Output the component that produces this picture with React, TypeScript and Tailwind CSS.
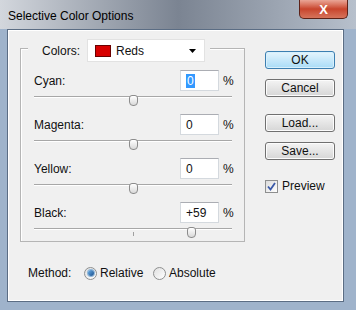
import React from "react"

const font = { fontFamily: '"Liberation Sans", Arial, sans-serif' }

type Row = { label: string; value: string; thumb: number; selected?: boolean }

const rows: Row[] = [
  { label: "Cyan:", value: "0", thumb: 95, selected: true },
  { label: "Magenta:", value: "0", thumb: 95 },
  { label: "Yellow:", value: "0", thumb: 95 },
  { label: "Black:", value: "+59", thumb: 153 },
]

function Slider({ thumb }: { thumb: number }) {
  return (
    <div className="relative ml-[13px] h-[16px] w-[198px]">
      <div className="absolute left-0 right-0 top-[5px] h-[2px] border-t border-[#a7a7a7] bg-white" />
      <div className="absolute left-[99px] top-[9px] h-[4px] w-px bg-[#a0a0a0]" />
      <div
        className="absolute top-[4px] h-[11px] w-[9px] rounded-t-[3px] rounded-b-[4px] border border-[#8c8c8c] bg-gradient-to-b from-white to-[#d9d9d9]"
        style={{ left: thumb }}
      />
    </div>
  )
}

function Btn({ children, primary }: { children: React.ReactNode; primary?: boolean }) {
  return (
    <div
      className={
        primary
          ? "flex h-[18px] w-[70px] items-center justify-center rounded-[3px] border border-[#3c7fb1] bg-gradient-to-b from-[#e5f5fd] to-[#a9dcf7] text-[12px] shadow-[inset_0_0_0_1px_#d8f0fc]"
          : "flex h-[18px] w-[70px] items-center justify-center rounded-[3px] border border-[#707070] bg-gradient-to-b from-[#f4f4f4] to-[#d6d6d6] text-[12px] shadow-[inset_0_0_0_1px_#fcfcfc]"
      }
    >
      {children}
    </div>
  )
}

function Radio({ on }: { on?: boolean }) {
  return (
    <div className="flex h-[13px] w-[13px] items-center justify-center rounded-full border border-[#8e8f8f] bg-gradient-to-br from-[#e0e0e0] to-white">
      {on && <div className="h-[6px] w-[6px] rounded-full bg-gradient-to-br from-[#6fb2e8] to-[#174f8e] shadow-[0_0_0_1px_#8fb6d8]" />}
    </div>
  )
}

export default function App() {
  return (
    <div
      className="flex h-[310px] w-[356px] flex-col bg-[#9fb3cb] text-[#111]"
      style={font}
    >
      <div className="flex h-[29px] items-start justify-between bg-gradient-to-r from-[#d3d7dd] via-[#7b8492] to-[#b7c0cc]">
        <div className="pl-[8px] pt-[7px] text-[12px] text-black">Selective Color Options</div>
        <div className="mr-[8px] flex h-[19px] w-[49px] items-center justify-center rounded-b-[5px] border border-t-0 border-[#5d2218] bg-gradient-to-b from-[#e9a596] via-[#c8442c] to-[#d6735b]">
          <span className="text-[13px] font-bold leading-none text-white">X</span>
        </div>
      </div>

      <div className="ml-[7px] flex h-[273px] w-[337px] flex-col border border-[#5b6d84] bg-[#f0f0f0] shadow-[inset_0_0_0_1px_#ffffff]">
        <div className="flex">
          <div className="ml-[12px] mt-[18px] flex h-[194px] w-[225px] flex-col border border-[#b5b5b5] shadow-[inset_1px_1px_0_#ffffff]">
            <div className="-mt-[10px] ml-[7px] flex h-[23px] w-[182px] items-center bg-[#f0f0f0] pl-[14px]">
              <span className="w-[45px] text-[12px]">Colors:</span>
              <div className="flex h-[23px] w-[118px] items-center border border-[#e2e2e2] bg-white pl-[7px]">
                <div className="h-[12px] w-[16px] border border-[#6a0000] bg-[#d70000]" />
                <span className="ml-[5px] flex-1 text-[12px]">Reds</span>
                <svg width="7" height="4" viewBox="0 0 7 4" className="mr-[8px]">
                  <path d="M0 0h7L3.5 4z" fill="#000" />
                </svg>
              </div>
            </div>

            <div className="mt-[8px] flex flex-col gap-[7px]">
              {rows.map((r) => (
                <div key={r.label} className="flex flex-col">
                  <div className="flex h-[21px] items-center pl-[13px]">
                    <span className="w-[146px] text-[12px]">{r.label}</span>
                    <div className="flex h-[21px] w-[39px] items-center border border-[#d4d9de] border-t-[#abadb3] bg-white pl-[5px] text-[12px]">
                      {r.selected ? (
                        <span className="bg-[#3399ff] px-px leading-[14px] text-white">{r.value}</span>
                      ) : (
                        <span>{r.value}</span>
                      )}
                    </div>
                    <span className="ml-[4px] text-[12px]">%</span>
                  </div>
                  <Slider thumb={r.thumb} />
                </div>
              ))}
            </div>
          </div>

          <div className="ml-[20px] mt-[21px] flex flex-col">
            <Btn primary>OK</Btn>
            <div className="mt-[10px]">
              <Btn>Cancel</Btn>
            </div>
            <div className="mt-[17px]">
              <Btn>Load...</Btn>
            </div>
            <div className="mt-[10px]">
              <Btn>Save...</Btn>
            </div>
            <div className="mt-[17px] flex items-center">
              <div className="flex h-[13px] w-[13px] items-center justify-center border border-[#8e8f8f] bg-gradient-to-br from-[#dcdcdc] to-white">
                <svg width="9" height="9" viewBox="0 0 9 9">
                  <path d="M1 4.5l2.5 3L8 1" stroke="#3a59a8" strokeWidth="1.8" fill="none" />
                </svg>
              </div>
              <span className="ml-[4px] text-[12px]">Preview</span>
            </div>
          </div>
        </div>

        <div className="ml-[20px] mt-[23px] flex h-[16px] items-center text-[12px]">
          <span className="w-[56px]">Method:</span>
          <Radio on />
          <span className="ml-[3px] w-[53px]">Relative</span>
          <Radio />
          <span className="ml-[3px]">Absolute</span>
        </div>
      </div>
    </div>
  )
}
